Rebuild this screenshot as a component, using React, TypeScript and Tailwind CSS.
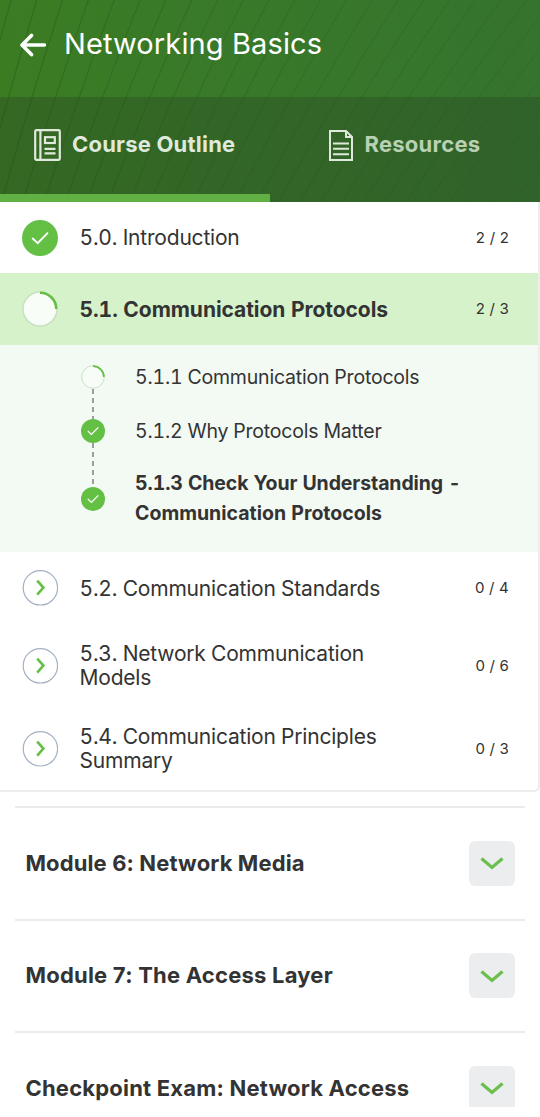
import React from "react";

const sections = [
  { title: "5.2. Communication Standards", count: "0 / 4", size: "h-[72px]" },
  { title: "5.3. Network Communication Models", count: "0 / 6", size: "h-[83px]" },
  { title: "5.4. Communication Principles Summary", count: "0 / 3", size: "h-[83px]" },
];

const modules = [
  { title: "Module 6: Network Media", spacing: "tracking-[0.12px]" },
  { title: "Module 7: The Access Layer", spacing: "tracking-[0.22px]" },
  { title: "Checkpoint Exam: Network Access", spacing: "tracking-[0.2px]" },
];

// slanted hairlines that lean further over towards the right edge
const stripes = Array.from({ length: 27 }, (_, i) => {
  const top = 11 + i * 25.8;
  const lean = 52 + i * 4.5;
  return `M${top} 0 Q${top - lean * 0.54} 101 ${top - lean} 202`;
});

function CheckCircle({ className }: { className: string }) {
  return (
    <svg viewBox="0 0 36 36" className={className} fill="none">
      <circle cx="18" cy="18" r="18" fill="#64bf45" />
      <path d="M10.2 18 15.7 23.2 26 12.6" stroke="white" strokeWidth="1.9" />
    </svg>
  );
}

function ProgressCircle({ className, fill }: { className: string; fill: string }) {
  return (
    <svg viewBox="0 0 36 36" className={className} fill="none">
      <circle cx="18" cy="18" r="17" fill={fill} stroke="#c5e0bf" strokeWidth="1.4" />
      <path d="M18 1.7A16.3 16.3 0 0 1 34.3 18" stroke="#64bf45" strokeWidth="2.6" />
    </svg>
  );
}

function ArrowCircle() {
  return (
    <svg viewBox="0 0 36 36" className="h-9 w-9 shrink-0" fill="none">
      <circle cx="18.4" cy="17.8" r="17.2" stroke="#a3b1c2" strokeWidth="1.2" />
      <path d="M15.2 10.6 21.4 17.6 15.2 24.6" stroke="#64bf45" strokeWidth="2.6" />
    </svg>
  );
}

function Header() {
  return (
    <header className="relative h-[202px] bg-linear-to-r from-[#3b7c23] via-[#38782a] to-[#35732e]">
      <svg viewBox="0 0 540 202" className="absolute inset-0 h-[202px] w-full" fill="none">
        <defs>
          <linearGradient id="stripe" gradientUnits="userSpaceOnUse" x1="0" y1="0" x2="540" y2="0">
            <stop offset="0" stopColor="#225819" stopOpacity="0.42" />
            <stop offset="0.5" stopColor="#225819" stopOpacity="0.25" />
            <stop offset="1" stopColor="#225819" stopOpacity="0.16" />
          </linearGradient>
        </defs>
        {stripes.map((d) => (
          <path key={d} d={d} stroke="url(#stripe)" strokeWidth="1.4" />
        ))}
      </svg>
      <div className="relative flex h-[97px] items-center pb-[9px] pl-5">
        <svg viewBox="0 0 26 24" className="mt-0.5 h-6 w-[26px]" fill="none" stroke="white" strokeWidth="3.6" strokeLinecap="round" strokeLinejoin="round">
          <path d="M11.5 2.4 2 12l9.5 9.6M2.5 12H24.3" />
        </svg>
        <h1 className="ml-[18px] whitespace-nowrap text-[29px] leading-9 tracking-[0.12px] text-white">
          Networking Basics
        </h1>
      </div>
      <div className="relative flex h-[105px] bg-[#2b4c24]/40 text-[22px] font-bold">
        <div className="flex w-[270px] items-center border-b-8 border-[#60b044] pl-[34px]">
          <svg viewBox="0 0 27 32" className="mt-[-2px] h-8 w-[27px]" fill="none" stroke="#dfe9dc" strokeWidth="2.2">
            <rect x="1.2" y="1.2" width="24.6" height="29.6" rx="1.2" />
            <path d="M6.4 1v30M10.5 19.8h11M10.5 24.3h11" />
            <rect x="11" y="8.2" width="9.8" height="5.8" />
          </svg>
          <span className="ml-[11px] mt-[-3px] whitespace-nowrap tracking-[0.2px] text-[#dfe9dc]">Course Outline</span>
        </div>
        <div className="flex w-[270px] items-center pb-2 pl-[59px]">
          <svg viewBox="0 0 24 31" className="mt-[-1px] h-[31px] w-6" fill="none" stroke="#dfe9dc" strokeWidth="2">
            <path d="M1 1h16l6 6v23H1ZM17 1v6h6M4 13.5h16M4 18.8h16M4 24.3h16" />
          </svg>
          <span className="ml-[11.5px] mt-[-3px] whitespace-nowrap tracking-[0.25px] text-[#b9d0b4]">Resources</span>
        </div>
      </div>
    </header>
  );
}

function Count({ children }: { children: React.ReactNode }) {
  return <span className="mt-px ml-auto whitespace-nowrap text-[15px] tracking-[0.2px]">{children}</span>;
}

function App() {
  return (
    <main className="h-[1117px] w-[540px] overflow-hidden bg-white font-['Inter','Liberation_Sans',sans-serif] text-[#333]">
      <Header />

      <section className="h-[590px] w-[540px] rounded-br-md border-r-2 border-b-2 border-[#eceeed]">
        <div className="flex h-[71px] items-center pr-[29px] pl-[22px]">
          <CheckCircle className="h-9 w-9 shrink-0" />
          <span className="ml-[21.5px] whitespace-nowrap text-[21px] tabular-nums tracking-[-0.2px]">
            5.0. Introduction
          </span>
          <Count>2 / 2</Count>
        </div>
        <div className="flex h-[72px] items-center bg-[#d6f2ca] pr-[29px] pl-[22px]">
          <ProgressCircle className="h-9 w-9 shrink-0" fill="#f9fdf8" />
          <span className="ml-[21.5px] mt-px whitespace-nowrap text-[21px] font-bold tabular-nums tracking-[-0.05px]">
            5.1. Communication Protocols
          </span>
          <Count>2 / 3</Count>
        </div>

        <div className="flex h-[207px] bg-[#f3faf3] pl-[81px] pt-5">
          <div className="flex w-6 flex-col items-center">
            <ProgressCircle className="h-6 w-6" fill="#f7fcf6" />
            <svg viewBox="0 0 2 30" className="h-[30px] w-0.5">
              <path d="M1 0v30" stroke="#9b9f9b" strokeWidth="2" strokeDasharray="5 4" />
            </svg>
            <CheckCircle className="h-6 w-6" />
            <svg viewBox="0 0 2 44" className="h-11 w-0.5">
              <path d="M1 0v44" stroke="#9b9f9b" strokeWidth="2" strokeDasharray="5 4" />
            </svg>
            <CheckCircle className="h-6 w-6" />
          </div>
          <div className="ml-[30px] flex flex-col text-[19.5px] leading-[30px] tabular-nums tracking-[-0.2px] whitespace-nowrap">
            <p className="mt-[-3px]">5.1.1 Communication Protocols</p>
            <p className="mt-6">5.1.2 Why Protocols Matter</p>
            <p className="mt-[22px] font-bold tracking-normal">
              <span className="tracking-[-0.1px]">5.1.3 Check Your Understanding -</span>
              <br />
              Communication Protocols
            </p>
          </div>
        </div>

        {sections.map((section) => (
          <div key={section.title} className={`flex items-center pr-[29px] pl-[22px] ${section.size}`}>
            <ArrowCircle />
            <span className="ml-[21.5px] mt-px w-[310px] text-[21px] leading-6 tabular-nums tracking-[-0.2px]">
              {section.title}
            </span>
            <Count>{section.count}</Count>
          </div>
        ))}
      </section>

      <section className="mx-[15px] mt-3.5 h-[301px] overflow-hidden">
        {modules.map((item) => (
          <div key={item.title} className="flex h-[112.5px] items-center border-t-2 border-[#eaecec] pr-2.5 pl-2.5">
            <h2 className={`ml-[0.5px] whitespace-nowrap text-[22px] font-bold ${item.spacing}`}>{item.title}</h2>
            <button className="ml-auto flex h-[45px] w-[46px] items-center justify-center rounded-md bg-[#ecedef]">
              <svg viewBox="0 0 24 14" className="h-3.5 w-6" fill="none" stroke="#6abf4e" strokeWidth="3.2">
                <path d="M1.5 2.5 12 11.5 22.5 2.5" />
              </svg>
            </button>
          </div>
        ))}
      </section>
    </main>
  );
}

export default App;
